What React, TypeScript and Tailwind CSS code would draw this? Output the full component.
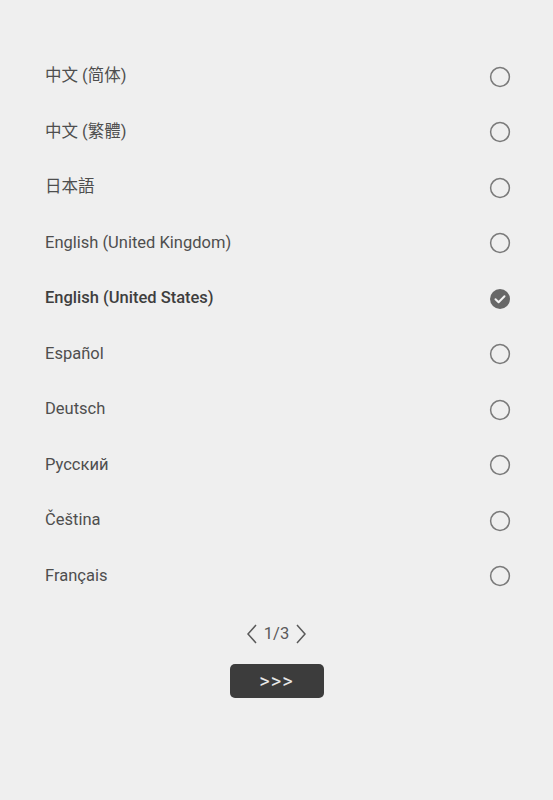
import React from "react";

const langs = [
  "中文 (简体)",
  "中文 (繁體)",
  "日本語",
  "English (United Kingdom)",
  "English (United States)",
  "Español",
  "Deutsch",
  "Русский",
  "Čeština",
  "Français",
];

const selected = 4;

function Radio({ on }: { on: boolean }) {
  if (on) {
    return (
      <svg width="22" height="22" viewBox="0 0 22 22">
        <circle cx="11" cy="11" r="10" fill="#686868" />
        <path d="M6.5 11.2 L9.6 14.2 L15.5 8.2" fill="none" stroke="#f4f4f4" strokeWidth="2" strokeLinecap="round" strokeLinejoin="round" />
      </svg>
    );
  }
  return (
    <svg width="22" height="22" viewBox="0 0 22 22">
      <circle cx="11" cy="11" r="9.4" fill="none" stroke="#7a7a7a" strokeWidth="1.5" />
    </svg>
  );
}

export default function App() {
  return (
    <div
      className="w-[553px] h-[800px] bg-[#efefef] flex flex-col"
      style={{ fontFamily: 'Roboto, "Noto Sans CJK SC", "Noto Sans CJK TC", "Noto Sans CJK JP", sans-serif' }}
    >
      <div className="pt-[49px] flex flex-col">
        {langs.map((l, i) => (
          <div key={l} className="h-[55.5px] flex items-center justify-between pl-[45px] pr-[42px]">
            <span
              className={
                i === selected
                  ? "text-[16.5px] text-[#3e3e3e] font-medium"
                  : "text-[16.5px] text-[#4e4e4e]"
              }
            >
              {l}
            </span>
            <Radio on={i === selected} />
          </div>
        ))}
      </div>
      <div className="mt-[18px] flex items-center justify-center gap-[6px] text-[#5a5a5a]">
        <svg width="12" height="22" viewBox="0 0 12 22">
          <path d="M10 2 L2 11 L10 20" fill="none" stroke="#5a5a5a" strokeWidth="1.5" />
        </svg>
        <span className="text-[16.5px]">1/3</span>
        <svg width="12" height="22" viewBox="0 0 12 22">
          <path d="M2 2 L10 11 L2 20" fill="none" stroke="#5a5a5a" strokeWidth="1.5" />
        </svg>
      </div>
      <div className="mt-[17px] flex justify-center">
        <button className="w-[94px] h-[34px] rounded-[5px] bg-[#3c3c3c] text-[#e8e8e8] text-[20px] flex items-center justify-center tracking-[1px]">
          &gt;&gt;&gt;
        </button>
      </div>
    </div>
  );
}
